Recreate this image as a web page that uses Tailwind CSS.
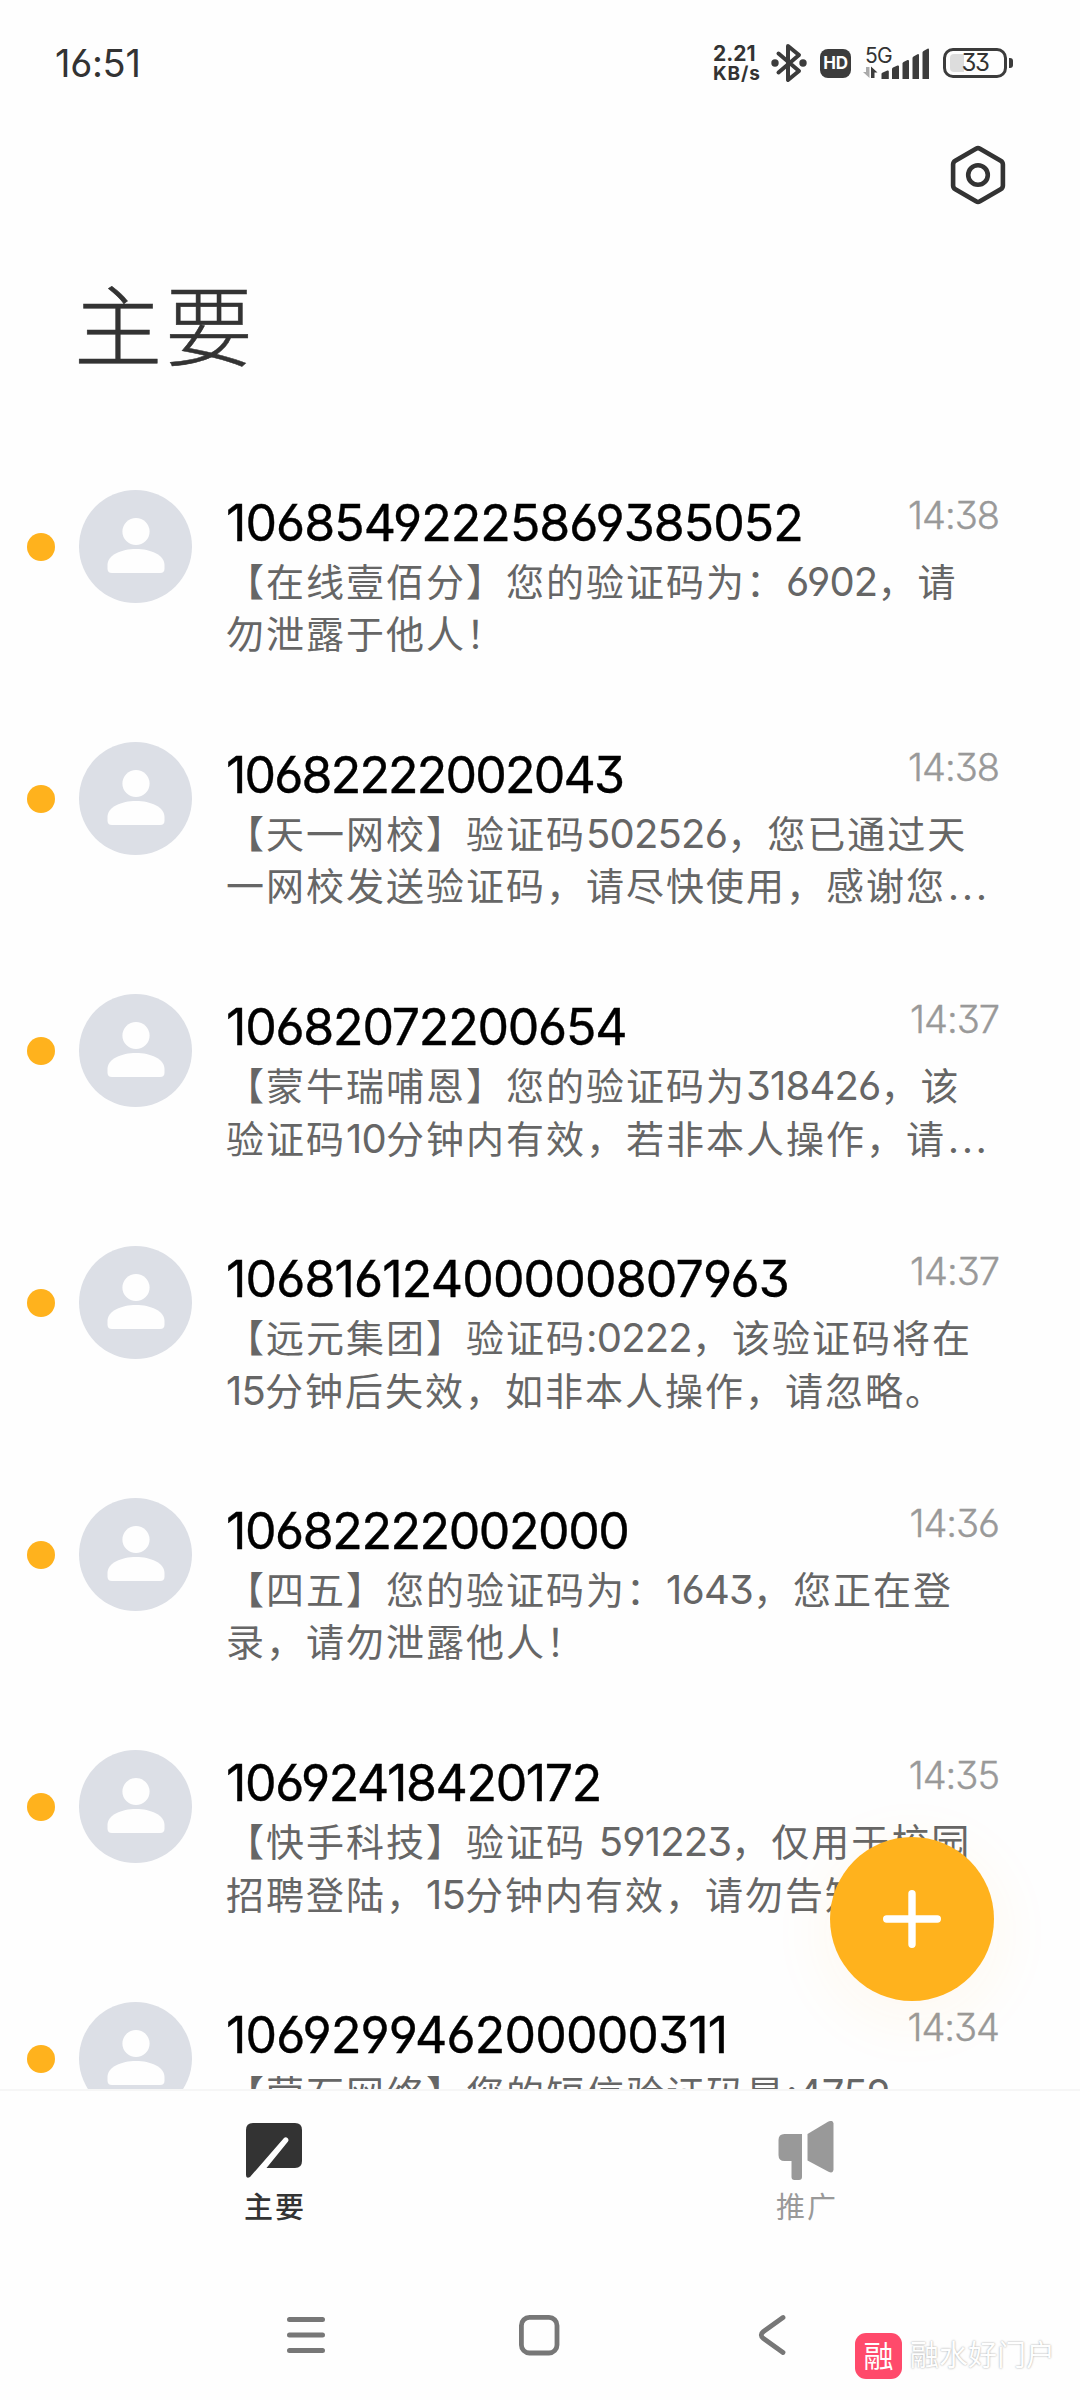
<!DOCTYPE html>
<html lang="zh-CN">
<head>
    <meta charset="UTF-8">
    <meta name="viewport" content="width=device-width, initial-scale=1.0">
    <title>主要</title>
    <script src="https://cdn.jsdelivr.net/npm/@tailwindcss/browser@4"></script>
</head>
<body class="bg-[#fefefe] font-['Inter','Noto_Sans_CJK_SC',sans-serif] [font-feature-settings:'cv03','cv04','cv09']">

    <div class="relative flex flex-col w-[1080px] h-[2400px] overflow-hidden">

        <!-- Status bar -->
        <div class="flex items-center h-[126px] pl-[55px] pr-[67px] text-[#333] shrink-0">
            <span class="text-[38px] leading-none tracking-[-0.3px]">16:51</span>
            <div class="flex items-center ml-auto">
                <div class="w-[50px] font-bold whitespace-nowrap">
                    <div class="text-[21px] leading-[20px] tracking-[0px]">2.21</div>
                    <div class="text-[19px] leading-[19px] tracking-[0.9px]">KB/s</div>
                </div>
                <svg class="ml-[8px]" width="36" height="40" viewBox="0 0 36 40" fill="none" stroke="#3c3c3c" stroke-width="4" stroke-linejoin="round" stroke-linecap="round">
                    <path d="M7.500 10.500l20.500 17.500-11 9V3l11 9L7.500 29.500"/>
                    <circle cx="4" cy="20" r="3.700" fill="#3c3c3c" stroke="none"/>
                    <circle cx="32" cy="20" r="3.700" fill="#3c3c3c" stroke="none"/>
                </svg>
                <div class="flex items-center justify-center w-[31px] h-[29px] ml-[13px] rounded-[8px] bg-[#3c3c3c] text-[#fefefe] text-[17px] font-bold leading-none tracking-[-0.3px]">HD</div>
                <div class="relative w-[68px] h-[36px] ml-[12px]">
                    <span class="absolute left-[2px] top-0 text-[21px] leading-[22px] tracking-[-0.8px]">5G</span>
                    <svg class="absolute left-0 top-0" width="68" height="36" viewBox="863 45 68 36" fill="#3c3c3c">
                        <path d="M866 67h3.500v11l-6.500-6h3z" fill="#aaa"/>
                        <path d="M871 66.500l6.500 6h-3V78H871z"/>
                        <path d="M881.500 74q0-.8.8-1.200l5-2.200q1.500-.4 1.500 1V79h-7.300z"/>
                        <path d="M892 69q0-1 1-1.500l4.500-2q1.500-.4 1.500 1V79h-7z"/>
                        <path d="M902.500 63.500q0-1 1-1.500l4-2q1.500-.4 1.500 1V79h-6.500z"/>
                        <path d="M912.500 58q0-1 1-1.500l4-2.300q1.500-.4 1.500 1V79h-6.500z"/>
                        <path d="M922.500 52.500q0-1 1-1.500l4-2.300q1.500-.4 1.500 1V79h-6.500z"/>
                    </svg>
                </div>
                <div class="relative flex items-center justify-center w-[64px] h-[30px] ml-[12px] rounded-[10px] border-[3px] border-[#3c3c3c]">
                    <div class="absolute left-[4px] top-[3px] w-[14px] h-[18px] rounded-l-[4px] bg-[#ddd]"></div>
                    <span class="relative text-[24px] leading-none tracking-[-1.5px]">33</span>
                </div>
                <div class="w-[4px] h-[10px] ml-[2px] rounded-r-[3px] bg-[#3c3c3c]"></div>
            </div>
        </div>

        <!-- Settings button -->
        <div class="flex justify-end h-[98px] pt-[18px] pr-[73px] shrink-0">
            <svg width="58" height="62" viewBox="0 0 58 62" fill="none" stroke="#333" stroke-width="4.600" stroke-linejoin="round">
                <path d="M27 4.700q2-1.100 4 0L51.700 16.700q2.200 1.300 2.200 3.800v21q0 2.500-2.200 3.800L31 57.300q-2 1.100-4 0L6.300 45.300q-2.200-1.300-2.200-3.800v-21q0-2.500 2.200-3.800z"/>
                <circle cx="29" cy="31" r="9.800"/>
            </svg>
        </div>

        <!-- Title -->
        <h1 class="h-[266px] pl-[74px] pt-[45px] text-[88px] leading-[116px] tracking-[3px] font-light text-[#333] [-webkit-text-stroke:0.5px_#333] shrink-0">主要</h1>

        <!-- Message list -->
        <div id="messageList" class="flex-1 min-h-0 overflow-hidden"></div>

        <!-- Tabs -->
        <div class="flex justify-between h-[190px] px-[244px] pt-[30px] border-t-2 border-[#f6f6f6] shrink-0">
            <div class="flex flex-col items-center w-[60px] text-[#333] font-medium">
                <svg width="60" height="60" viewBox="0 0 60 60" fill="#333">
                    <path d="M9 2h42q7 0 7 7v31q0 7-7 7H22.500L44 20.500q1.200-2-.5-3.500t-3.500 0L6 56q-4 2-4-2V9q0-7 7-7z"/>
                </svg>
                <span class="mt-[9px] text-[29px] leading-[36px] tracking-[2px] whitespace-nowrap -mr-[2px]">主要</span>
            </div>
            <div class="flex flex-col items-center w-[60px] text-[#999]">
                <svg width="60" height="60" viewBox="0 0 60 60" fill="#999">
                    <path d="M8.500 13H26v43q0 3-3 3h-4.500q-3 0-3-3V40H8.500q-6 0-6-6V19q0-6 6-6z"/>
                    <path d="M31.500 13L52 .7Q57-1.500 57.500 2.500v46q-.5 4.500-5 2.300L31.500 39.500z"/>
                </svg>
                <span class="mt-[9px] text-[29px] leading-[36px] tracking-[2px] whitespace-nowrap -mr-[2px]">推广</span>
            </div>
        </div>

        <!-- System navigation -->
        <div class="flex items-start h-[121px] pt-[34px] pl-[284px] shrink-0">
            <svg width="44" height="44" viewBox="0 0 44 44" stroke="#777" stroke-width="5" stroke-linecap="round">
                <path d="M5.500 6.500h33M5.500 22h33M5.500 37.500h33"/>
            </svg>
            <svg class="ml-[189px]" width="44" height="44" viewBox="0 0 44 44" fill="none" stroke="#777" stroke-width="4.800">
                <rect x="4.400" y="4.400" width="35.600" height="35.600" rx="8"/>
            </svg>
            <svg class="ml-[190px]" width="44" height="44" viewBox="0 0 44 44" fill="none" stroke="#777" stroke-width="4.800" stroke-linecap="round">
                <path d="M32 4.500L12.500 18.500q-4.500 3.500 0 7L32 39.500"/>
            </svg>
        </div>

        <!-- Compose button -->
        <button class="absolute left-[830px] top-[1837px] flex items-center justify-center w-[164px] h-[164px] rounded-full bg-[#ffb21d] shadow-[0_14px_60px_8px_rgba(255,178,29,0.06)]">
            <svg width="60" height="60" viewBox="0 0 60 60" stroke="#fff" stroke-width="7.400" stroke-linecap="round">
                <path d="M30 4.700v50.600M4.700 30h50.600"/>
            </svg>
        </button>

        <!-- Source badge -->
        <div class="absolute left-[855px] top-[2333px] flex items-center">
            <div class="flex items-center justify-center w-[47px] h-[46px] rounded-[11px] bg-[#ff4a6b] text-white text-[30px] leading-none">融</div>
            <span class="ml-[8px] text-[29px] leading-[46px] text-[#fefefe] whitespace-nowrap [text-shadow:0_0_2px_rgba(0,0,0,0.4)]">融水好门户</span>
        </div>
    </div>

    <script>
        const messages = [
            { number: '10685492225869385052', tracking: 'tracking-[-0.93px]', time: '14:38', lines: ['【在线壹佰分】您的验证码为：6902，请', '勿泄露于他人！'] },
            { number: '10682222002043', tracking: 'tracking-[-1.8px]', time: '14:38', lines: ['【天一网校】验证码502526，您已通过天', '一网校发送验证码，请尽快使用，感谢您…'] },
            { number: '10682072200654', tracking: 'tracking-[-1.2px]', time: '14:37', lines: ['【蒙牛瑞哺恩】您的验证码为318426，该', '验证码10分钟内有效，若非本人操作，请…'] },
            { number: '10681612400000807963', tracking: 'tracking-[-0.83px]', time: '14:37', lines: ['【远元集团】验证码:0222，该验证码将在', '15分钟后失效，如非本人操作，请忽略。'] },
            { number: '10682222002000', tracking: 'tracking-[-1.4px]', time: '14:36', lines: ['【四五】您的验证码为：1643，您正在登', '录，请勿泄露他人！'] },
            { number: '10692418420172', tracking: 'tracking-[-1.35px]', time: '14:35', lines: ['【快手科技】验证码 591223，仅用于校园', '招聘登陆，15分钟内有效，请勿告知他…'] },
            { number: '106929946200000311', tracking: 'tracking-[-0.8px]', time: '14:34', lines: ['【萤石网络】您的短信验证码是:4759', ''] }
        ];

        // Digits are set slightly larger and tighter than the Chinese text
        function formatLine(line) {
            return line
                .replace(/[0-9:]+/g, '<span class="text-[40px] tracking-[-0.8px]">$&</span>')
                .replace('…', '<span class="ml-[2px] tracking-[3px]">...</span>');
        }

        const messageList = document.getElementById('messageList');
        messages.forEach(message => {
            messageList.innerHTML += `
                <div class="flex items-start h-[252px] pl-[27px]">
                    <div class="w-[28px] h-[28px] mt-[43px] rounded-full bg-[#ffb21d] shrink-0"></div>
                    <div class="w-[113px] h-[113px] ml-[24px] rounded-full bg-[#dcdfe6] shrink-0">
                        <svg width="113" height="113" viewBox="0 0 113 113" fill="#fefefe">
                            <circle cx="57" cy="41.500" r="13.600"/>
                            <path d="M28.500 75c0-10 14-16 28.500-16s28.500 6 28.500 16v3.500q0 4.500-4.500 4.500H33q-4.500 0-4.500-4.500z"/>
                        </svg>
                    </div>
                    <div class="relative flex-1 ml-[34px] pt-[5px]">
                        <div class="text-[50px] leading-[56px] [-webkit-text-stroke:0.4px_#000] ${message.tracking} text-black">${message.number}</div>
                        <div class="mt-[4px] text-[38px] tracking-[2px] leading-[53px] text-[#666] whitespace-nowrap">
                            <div class="h-[53px]">${formatLine(message.lines[0])}</div>
                            <div class="h-[53px]">${formatLine(message.lines[1])}</div>
                        </div>
                        <div class="absolute right-[81px] top-[2px] text-[38px] leading-[46px] tracking-[-1px] font-light [-webkit-text-stroke:0.4px_#999] text-[#999]">${message.time}</div>
                    </div>
                </div>
            `;
        });
    </script>

</body>
</html>
